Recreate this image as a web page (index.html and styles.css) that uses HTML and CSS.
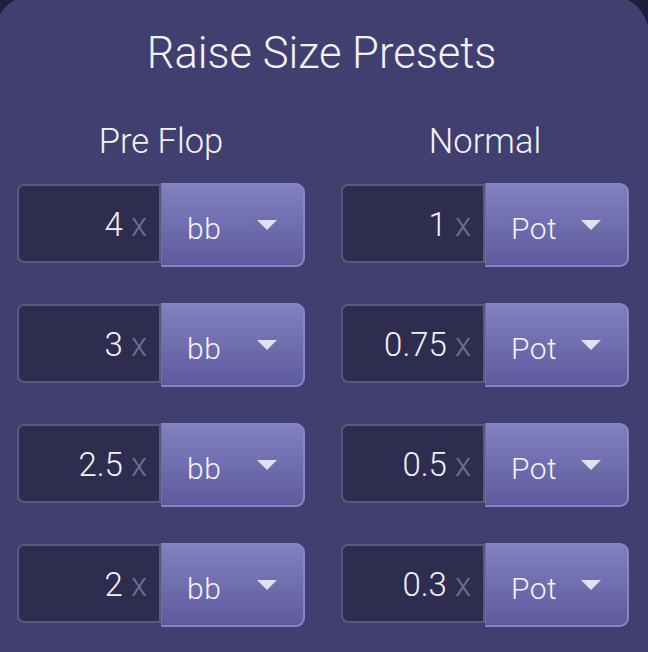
FILE: index.html
```html
<!DOCTYPE html>
<html lang="en">
<head>
<meta charset="utf-8">
<title>Raise Size Presets</title>
<link rel="stylesheet" href="styles.css">
</head>
<body>
<div class="card">
  <h1 class="title">Raise Size Presets</h1>
  <div class="columns">
    <section class="col">
      <h2 class="col-title">Pre Flop</h2>
      <div class="rows">
        <div class="preset">
          <div class="amount"><span class="num">4</span><span class="mult">x</span></div>
          <div class="unit"><span class="unit-label">bb</span><svg class="caret" width="20" height="10" viewBox="0 0 20 10"><polygon points="0,0 20,0 10,10"/></svg></div>
        </div>
        <div class="preset">
          <div class="amount"><span class="num">3</span><span class="mult">x</span></div>
          <div class="unit"><span class="unit-label">bb</span><svg class="caret" width="20" height="10" viewBox="0 0 20 10"><polygon points="0,0 20,0 10,10"/></svg></div>
        </div>
        <div class="preset">
          <div class="amount"><span class="num">2.5</span><span class="mult">x</span></div>
          <div class="unit"><span class="unit-label">bb</span><svg class="caret" width="20" height="10" viewBox="0 0 20 10"><polygon points="0,0 20,0 10,10"/></svg></div>
        </div>
        <div class="preset">
          <div class="amount"><span class="num">2</span><span class="mult">x</span></div>
          <div class="unit"><span class="unit-label">bb</span><svg class="caret" width="20" height="10" viewBox="0 0 20 10"><polygon points="0,0 20,0 10,10"/></svg></div>
        </div>
      </div>
    </section>
    <section class="col">
      <h2 class="col-title">Normal</h2>
      <div class="rows">
        <div class="preset">
          <div class="amount"><span class="num">1</span><span class="mult">x</span></div>
          <div class="unit"><span class="unit-label">Pot</span><svg class="caret" width="20" height="10" viewBox="0 0 20 10"><polygon points="0,0 20,0 10,10"/></svg></div>
        </div>
        <div class="preset">
          <div class="amount"><span class="num">0.75</span><span class="mult">x</span></div>
          <div class="unit"><span class="unit-label">Pot</span><svg class="caret" width="20" height="10" viewBox="0 0 20 10"><polygon points="0,0 20,0 10,10"/></svg></div>
        </div>
        <div class="preset">
          <div class="amount"><span class="num">0.5</span><span class="mult">x</span></div>
          <div class="unit"><span class="unit-label">Pot</span><svg class="caret" width="20" height="10" viewBox="0 0 20 10"><polygon points="0,0 20,0 10,10"/></svg></div>
        </div>
        <div class="preset">
          <div class="amount"><span class="num">0.3</span><span class="mult">x</span></div>
          <div class="unit"><span class="unit-label">Pot</span><svg class="caret" width="20" height="10" viewBox="0 0 20 10"><polygon points="0,0 20,0 10,10"/></svg></div>
        </div>
      </div>
    </section>
  </div>
</div>
</body>
</html>
```
FILE: styles.css
```css
html, body {
  margin: 0;
  padding: 0;
}
body {
  background: #1f1e3d;
  overflow: hidden;
  font-family: Roboto, "Noto Sans", sans-serif;
  color: #f3f2f9;
}
.card {
  margin: -5px 0 0 -6px;
  width: 655px;
  height: 657px;
  box-sizing: border-box;
  padding-top: 34px;
  background: #403f70;
  border-radius: 40px 40px 0 0;
}
.title {
  margin: 0;
  font-size: 43.5px;
  font-weight: 300;
  line-height: 50px;
  text-align: center;
}
.columns {
  display: grid;
  grid-template-columns: 288px 288px;
  column-gap: 36px;
  margin-top: 42px;
  padding-left: 23px;
}
.col-title {
  margin: 0 0 22px;
  font-size: 34.5px;
  font-weight: 300;
  line-height: 40px;
  text-align: center;
}
.rows {
  display: flex;
  flex-direction: column;
  gap: 36px;
}
.preset {
  display: flex;
  align-items: flex-start;
  height: 84px;
}
.amount {
  margin-top: 1px;
  width: 144px;
  height: 79px;
  box-sizing: border-box;
  border: 2px solid #5a587c;
  border-radius: 7px 0 0 7px;
  background: #2e2c4f;
  display: flex;
  align-items: center;
  justify-content: flex-end;
  padding: 3px 12px 0 0;
}
.num {
  font-size: 33px;
  font-weight: 300;
  line-height: 1.2;
}
.mult {
  font-size: 33px;
  font-weight: 300;
  line-height: 1.2;
  color: #716f94;
  margin-left: 8px;
}
.unit {
  flex: 1;
  height: 84px;
  box-sizing: border-box;
  border: 2px solid #8784c8;
  border-left: 1px solid #6f6cb0;
  border-radius: 0 9px 9px 0;
  background: linear-gradient(#8280c0, #5e5a9d);
  display: flex;
  align-items: center;
  justify-content: space-between;
  padding: 0 26px 0 25px;
}
.unit-label {
  font-size: 30px;
  font-weight: 300;
  letter-spacing: 0.5px;
  line-height: 1.2;
  padding-top: 8px;
  color: #f5f4fb;
}
.caret {
  display: block;
  fill: #e3e0f3;
}
```
